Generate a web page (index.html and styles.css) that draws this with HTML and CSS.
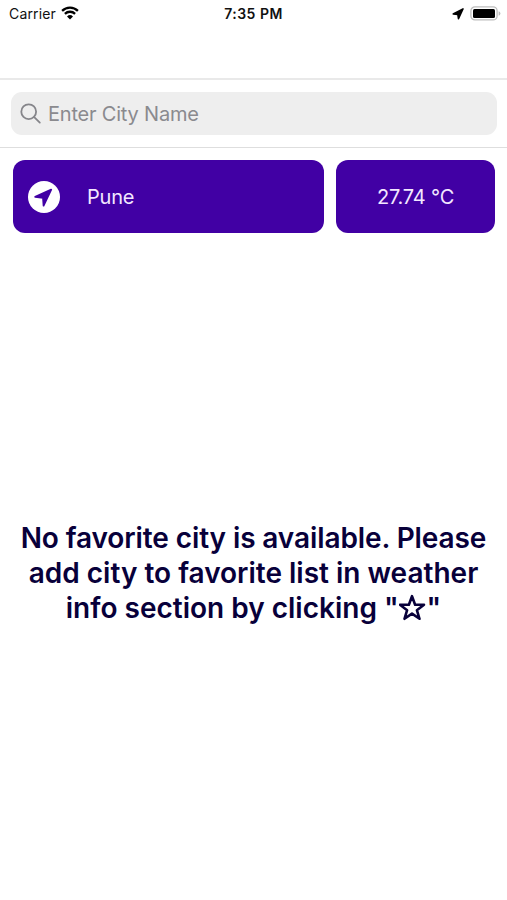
FILE: index.html
```
<!DOCTYPE html>
<html lang="en">
<head>
    <meta charset="UTF-8">
    <title>Weather</title>
    <link rel="stylesheet" href="styles.css">
</head>
<body>
    <div id="container">
        <div id="status-bar">
            <div class="carrier">
                <span>Carrier</span>
                <svg class="wifi" width="18" height="14" viewBox="0 0 18 14">
                    <path d="M1.1 4.8a11.4 11.4 0 0 1 15.8 0M3.9 7.8a7.4 7.4 0 0 1 10.2 0" fill="none" stroke="#000" stroke-width="2.3"/>
                    <path d="M9 13.5l-3-3.1a4.3 4.3 0 0 1 6 0z"/>
                </svg>
            </div>
            <div class="time">7:35 PM</div>
            <div class="battery">
                <svg class="location" width="12" height="12" viewBox="0 0 12 12">
                    <path d="M11 0.9L6.5 10.8L5.8 6.6L1.2 6z" stroke="#000" stroke-width="1.5" stroke-linejoin="round"/>
                </svg>
                <svg width="31" height="15" viewBox="0 0 31 15">
                    <rect x="0.9" y="0.9" width="26.2" height="13" rx="4" fill="#fff" stroke="#bdbdbd" stroke-width="1.3"/>
                    <rect x="3" y="3" width="22" height="9" rx="1.5"/>
                    <path d="M28.6 5.2q1.8 0.6 1.8 2.3t-1.8 2.3z" fill="#bdbdbd"/>
                </svg>
            </div>
        </div>
        <div id="nav-bar"></div>
        <div id="search-box">
            <div class="search-field">
                <svg width="22" height="22" viewBox="0 0 22 22">
                    <circle cx="8.7" cy="8.7" r="7.4"/>
                    <path d="M14.2 14.2L19.8 19.6"/>
                </svg>
                <span>Enter City Name</span>
            </div>
        </div>
        <div id="current">
            <div class="card city">
                <svg width="32" height="32" viewBox="0 0 32 32">
                    <circle cx="16" cy="16" r="16" fill="#fff"/>
                    <path d="M7.2 15.8L23.2 8.6L15.6 24.6L15 16.8z" fill="#4100a4" stroke="#4100a4" stroke-width="1.8" stroke-linejoin="round"/>
                </svg>
                <span>Pune</span>
            </div>
            <div class="card temp"><span>27.74 °C</span></div>
        </div>
        <div id="empty">
            <p class="line1">No favorite city is available. Please</p>
            <p class="line2">add city to favorite list in weather</p>
            <p class="line3">info section by clicking "<svg width="28" height="28" viewBox="2 0 28 28"><path d="M15 2.2L18.1 10.7H27L19.9 16.2L22.5 24.8L15 19.6L7.5 24.8L10.1 16.2L3 10.7H11.9z"/></svg>"</p>
        </div>
    </div>
</body>
</html>
```
FILE: styles.css
```
*{
    padding: 0;
    margin: 0;
    box-sizing: border-box;
}
body{
    background: #fff;
    font-family: Inter, "Liberation Sans", sans-serif;
}
svg{
    display: block;
    flex: none;
}
#container{
    width: 507px;
    height: 900px;
    overflow: hidden;
    display: flex;
    flex-direction: column;
}
#status-bar{
    height: 28px;
    padding: 0 6px 0 6px;
    display: grid;
    grid-template-columns: 1fr auto 1fr;
    align-items: center;
    font-size: 14px;
    line-height: 28px;
    color: #111;
}
.carrier{
    padding-left: 3px;
    display: flex;
    align-items: center;
    gap: 5px;
    letter-spacing: 0.15px;
}
.wifi{
    margin-top: -2px;
}
.time{
    font-weight: 600;
    letter-spacing: 0.5px;
}
.battery{
    display: flex;
    justify-content: flex-end;
    align-items: center;
    gap: 6px;
    margin-top: -2px;
}
.location{
    margin-top: 2px;
}
#nav-bar{
    height: 52px;
    border-bottom: 2px solid #e9e9e9;
}
#search-box{
    height: 68px;
    padding: 12px 10px 12px 11px;
    border-bottom: 1px solid #dedede;
}
.search-field{
    height: 43px;
    padding-left: 9px;
    border-radius: 11px;
    background: #eee;
    display: flex;
    align-items: center;
    gap: 6px;
    color: #8a8a8e;
    font-size: 20px;
    letter-spacing: -0.2px;
}
.search-field svg{
    fill: none;
    stroke: #85858a;
    stroke-width: 1.8;
    stroke-linecap: round;
}
#current{
    padding: 12px 12px 0 13px;
    display: flex;
    gap: 12px;
}
.card{
    height: 73px;
    border-radius: 12px;
    background: #4100a4;
    color: #f3e8ff;
    font-size: 20px;
    letter-spacing: -0.2px;
    display: flex;
    align-items: center;
}
.city{
    flex: 1;
    padding-left: 15px;
    gap: 27px;
}
.temp{
    width: 159px;
    justify-content: center;
}
#empty{
    flex: 1;
    display: flex;
    flex-direction: column;
    align-items: center;
    padding-top: 288px;
    color: #08003a;
    font-size: 28px;
    font-weight: 600;
    line-height: 35px;
    white-space: nowrap;
}
.line1{
    letter-spacing: -0.1px;
}
#empty svg{
    display: inline-block;
    vertical-align: -4px;
    fill: none;
    stroke: #08003a;
    stroke-width: 2.6;
    stroke-linejoin: round;
}
```
